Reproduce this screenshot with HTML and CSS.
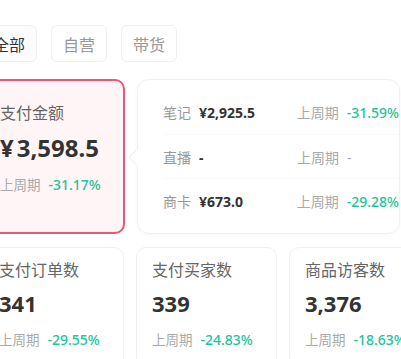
FILE: index.html
```html
<!DOCTYPE html>
<html lang="zh-CN">
<head>
  <meta charset="UTF-8" />
  <meta name="viewport" content="width=device-width, initial-scale=1.0"/>
  <title>数据概览</title>
  <link rel="stylesheet" href="styles.css">
</head>
<body>
  <div class="page">

    <div class="tabs">
      <div class="tab active">全部</div>
      <div class="tab">自营</div>
      <div class="tab">带货</div>
    </div>

    <!-- 支付金额 + 渠道明细 -->
    <div class="row top-row">
      <div class="card card-main">
        <div class="card-title">支付金额</div>
        <div class="card-value"><span class="yen">¥</span>3,598.5</div>
        <div class="compare"><span class="compare-label">上周期</span><span class="pct">-31.17%</span></div>
      </div>

      <div class="detail">
        <div class="detail-row">
          <div class="detail-left"><span class="detail-label">笔记</span><span class="detail-value">¥2,925.5</span></div>
          <div class="detail-right"><span class="compare-label">上周期</span><span class="pct">-31.59%</span></div>
        </div>
        <div class="detail-row">
          <div class="detail-left"><span class="detail-label">直播</span><span class="detail-value">-</span></div>
          <div class="detail-right"><span class="compare-label">上周期</span><span class="compare-label">-</span></div>
        </div>
        <div class="detail-row">
          <div class="detail-left"><span class="detail-label">商卡</span><span class="detail-value">¥673.0</span></div>
          <div class="detail-right"><span class="compare-label">上周期</span><span class="pct">-29.28%</span></div>
        </div>
      </div>
    </div>

    <div class="row bottom-row">
      <div class="card">
        <div class="card-title">支付订单数</div>
        <div class="card-value">341</div>
        <div class="compare"><span class="compare-label">上周期</span><span class="pct">-29.55%</span></div>
      </div>
      <div class="card">
        <div class="card-title">支付买家数</div>
        <div class="card-value">339</div>
        <div class="compare"><span class="compare-label">上周期</span><span class="pct">-24.83%</span></div>
      </div>
      <div class="card">
        <div class="card-title">商品访客数</div>
        <div class="card-value">3,376</div>
        <div class="compare"><span class="compare-label">上周期</span><span class="pct">-18.63%</span></div>
      </div>
    </div>

  </div>
</body>
</html>
```

FILE: styles.css
```css
body {
  margin: 0;
  background: #fff;
  font-family: "Noto Sans", "Noto Sans CJK SC", sans-serif;
  color: #333;
  overflow: hidden;
}

.page {
  margin-left: -17px;
  padding-top: 25px;
  width: 460px;
}

.tabs {
  display: flex;
  gap: 14px;
  margin-left: -2px;
}

.tab {
  width: 56px;
  height: 37px;
  box-sizing: border-box;
  border: 1px solid #efefef;
  border-radius: 6px;
  display: flex;
  align-items: center;
  justify-content: center;
  font-size: 16px;
  color: #999;
}

.tab.active {
  color: #333;
  background: #fcfcfc;
}

.row {
  display: flex;
  gap: 12px;
}

.top-row {
  margin-top: 17px;
}

.bottom-row {
  margin-top: 13px;
}

.card {
  width: 141px;
  box-sizing: border-box;
  border: 1px solid #eeeeee;
  border-radius: 10px;
  padding: 11px 0 0 15px;
  height: 120px;
  flex-shrink: 0;
}

.card-main {
  width: 142px;
  height: 155px;
  padding-top: 21px;
  background: #fff5f6;
  border: 2px solid #ef5474;
}

.card-title {
  font-size: 16px;
  line-height: 22px;
  color: #666;
  white-space: nowrap;
}

.card-value {
  margin-top: 7px;
  font-size: 22px;
  line-height: 30px;
  font-weight: 700;
  color: #333;
  white-space: nowrap;
}

.card-main .card-value {
  margin-top: 9px;
  font-size: 24px;
}

.yen {
  margin-right: 3px;
}

.compare {
  margin-top: 12px;
  font-size: 13.5px;
  line-height: 20px;
  white-space: nowrap;
}

.compare-label {
  color: #aaa;
  margin-right: 8px;
}

.pct {
  color: #22c39b;
  font-weight: 500;
  font-size: 14px;
}

/* 渠道明细 */
.detail {
  position: relative;
  width: 263px;
  height: 155px;
  box-sizing: border-box;
  border: 1px solid #f0f0f0;
  border-radius: 12px;
  box-shadow: 0 1px 4px rgba(0, 0, 0, 0.03);
  padding: 4px 0 4px 25px;
  display: flex;
  flex-direction: column;
  justify-content: center;
  flex-shrink: 0;
}

.detail::before {
  content: "";
  position: absolute;
  left: -7px;
  top: 71px;
  width: 12px;
  height: 12px;
  background: #fff;
  border-left: 1px solid #f0f0f0;
  border-bottom: 1px solid #f0f0f0;
  transform: rotate(45deg);
}

.detail-row {
  display: flex;
  align-items: center;
  height: 43.5px;
  border-bottom: 1px solid #fafafa;
  white-space: nowrap;
  font-size: 14px;
}

.detail-row:last-child {
  border-bottom: none;
}

.detail-left {
  width: 134px;
}

.detail-label {
  color: #999;
  margin-right: 8px;
}

.detail-value {
  color: #333;
  font-weight: 700;
}
```
